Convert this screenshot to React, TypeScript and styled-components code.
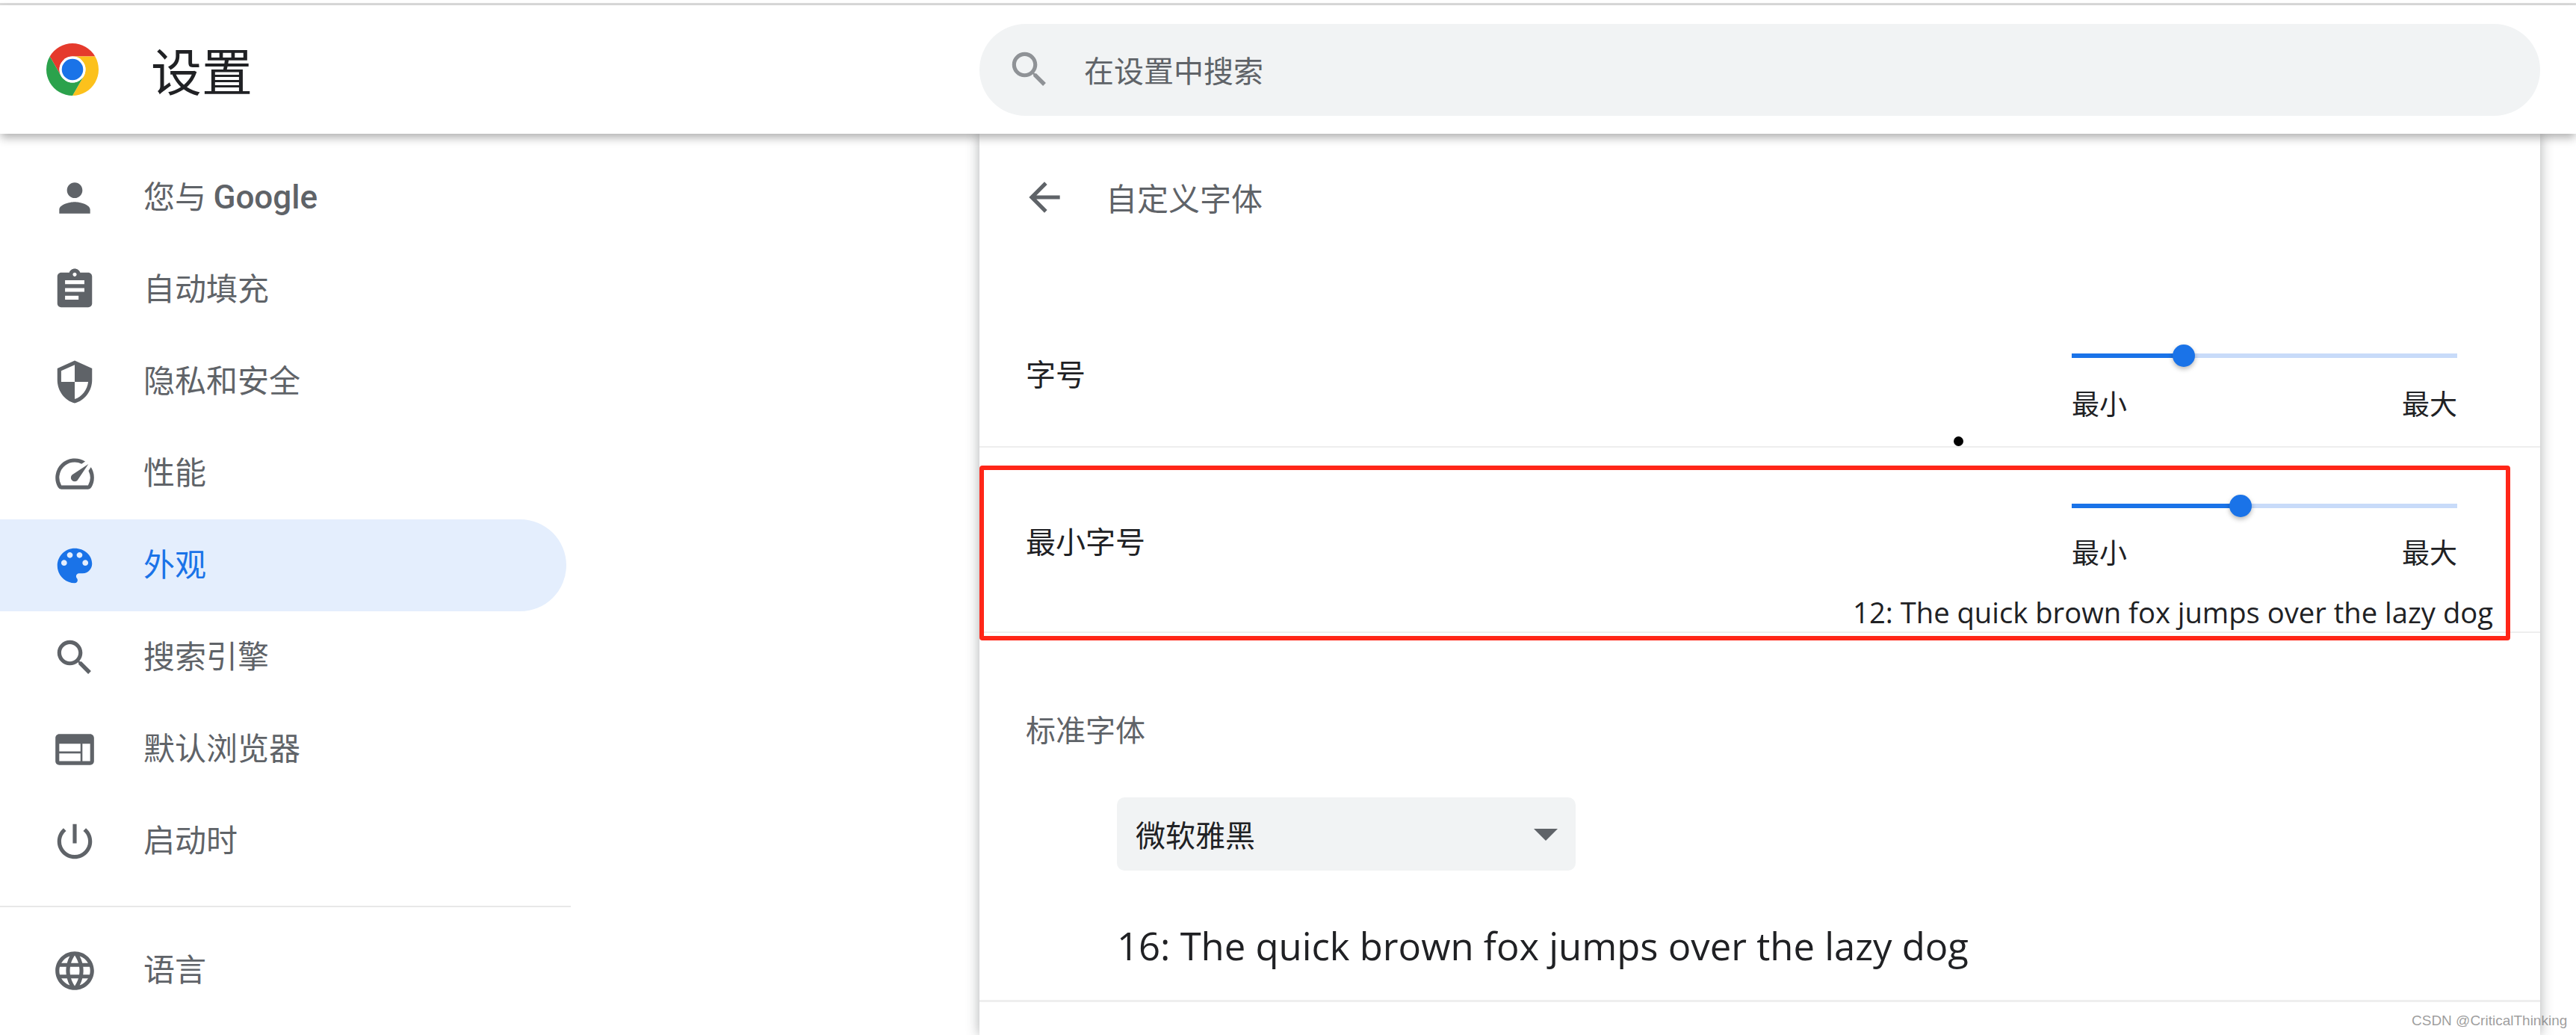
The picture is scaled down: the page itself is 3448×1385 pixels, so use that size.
import React from "react";
import styled, { createGlobalStyle } from "styled-components";

const CJK = `"Noto Sans CJK SC", "Noto Sans", sans-serif`;
const LATIN = `"Open Sans", "Noto Sans CJK SC", sans-serif`;

const Global = createGlobalStyle`
  html, body { margin: 0; padding: 0; background: #fff; }
  * { box-sizing: border-box; }
`;

const Page = styled.div`
  position: relative;
  width: 3448px;
  height: 1385px;
  overflow: hidden;
  background: #fff;
  font-family: ${CJK};
  color: #202124;
`;

const TopLine = styled.div`
  height: 7px;
  border-top: 4px solid #fff;
  background: #dcdcdc;
`;

const Header = styled.header`
  position: relative;
  z-index: 2;
  display: flex;
  align-items: center;
  height: 172px;
  background: #fff;
  box-shadow: 0 6px 12px -1px rgba(0, 0, 0, 0.32);
`;

const Brand = styled.div`
  display: flex;
  align-items: center;
  gap: 70px;
  width: 1311px;
  padding-left: 62px;
`;

const Title = styled.h1`
  margin: 0;
  font-size: 68px;
  line-height: 80px;
  font-weight: 400;
  color: #202124;
`;

const Search = styled.div`
  display: flex;
  align-items: center;
  gap: 42px;
  width: 2089px;
  height: 123px;
  padding-left: 36px;
  border-radius: 62px;
  background: #f1f3f4;
  font-size: 40px;
  color: #5f6368;
`;

const Icon = styled.svg<{ $size?: number; $color?: string }>`
  flex: none;
  width: ${(p) => p.$size ?? 62}px;
  height: ${(p) => p.$size ?? 62}px;
  fill: ${(p) => p.$color ?? "#5f6368"};
`;

const Body = styled.div`
  display: flex;
  height: 1206px;
`;

const Sidebar = styled.nav`
  width: 1311px;
  padding-top: 24px;
`;

const NavItem = styled.div<{ $active?: boolean }>`
  display: flex;
  align-items: center;
  gap: 61px;
  width: 758px;
  height: 123px;
  padding-left: 69px;
  border-radius: 0 62px 62px 0;
  font-size: 42px;
  color: ${(p) => (p.$active ? "#1a73e8" : "#5f6368")};
  background: ${(p) => (p.$active ? "#e4eefd" : "transparent")};
`;

const NavLabel = styled.span`
  margin-top: -8px;
`;

const Wordmark = styled.span`
  font-family: Roboto, sans-serif;
  font-size: 44px;
  font-weight: 500;
`;

const NavDivider = styled.hr`
  width: 764px;
  height: 2px;
  margin: 25px 0 23px;
  border: 0;
  background: #e8e8e8;
`;

const Card = styled.main`
  width: 2089px;
  background: #fff;
  box-shadow: 0 0 16px rgba(60, 64, 67, 0.42);
`;

const SubHeader = styled.div`
  display: flex;
  align-items: center;
  gap: 51px;
  height: 170px;
  padding-left: 56px;
  font-size: 42px;
  color: #5f6368;
  & > span { margin-top: -2px; }
`;

const Row = styled.section<{ $height: number; $top: number }>`
  position: relative;
  display: flex;
  justify-content: space-between;
  height: ${(p) => p.$height}px;
  padding: ${(p) => p.$top}px 111px 0 62px;
  border-bottom: 2px solid #eeeeee;
`;

const RowLabel = styled.div<{ $offset: number }>`
  margin-top: ${(p) => p.$offset}px;
  font-size: 40px;
  line-height: 48px;
  color: #202124;
`;

const SliderBox = styled.div`
  width: 516px;
`;

const Track = styled.div<{ $gap: number }>`
  position: relative;
  height: 6px;
  margin-bottom: ${(p) => p.$gap}px;
  background: #c8dbf9;
`;

const TrackFill = styled.div`
  height: 100%;
  background: #1a73e8;
`;

const Knob = styled.div`
  position: absolute;
  top: -12px;
  width: 30px;
  height: 30px;
  margin-left: -15px;
  border-radius: 50%;
  background: #1a73e8;
  box-shadow: 0 3px 6px rgba(0, 0, 0, 0.28);
`;

const Ends = styled.div`
  display: flex;
  justify-content: space-between;
  font-size: 37px;
  line-height: 44px;
  color: #202124;
`;

const Marker = styled.span`
  position: absolute;
  left: 1304px;
  bottom: 0;
  width: 13px;
  height: 13px;
  border-radius: 50%;
  background: #000;
`;

const Sample = styled.div`
  position: absolute;
  right: 63px;
  bottom: 4px;
  font-family: ${LATIN};
  font-size: 38.2px;
  line-height: 44px;
  color: #202124;
`;

const Highlight = styled.div`
  position: absolute;
  z-index: 1;
  left: 0;
  right: 40px;
  top: 24px;
  bottom: -12px;
  border: 6px solid #ff2618;
  border-radius: 4px;
  pointer-events: none;
`;

const FontSection = styled.section`
  height: 494px;
  padding: 104px 0 0 62px;
  border-bottom: 3px solid #eeeeee;
`;

const SectionLabel = styled.div`
  font-size: 40px;
  line-height: 48px;
  color: #5f6368;
`;

const FontSelect = styled.div`
  position: relative;
  display: flex;
  align-items: center;
  width: 614px;
  height: 98px;
  margin: 68px 0 0 122px;
  padding-left: 25px;
  border-radius: 10px;
  background: #f1f3f4;
  font-size: 40px;
  color: #202124;
`;

const Caret = styled.span`
  position: absolute;
  right: 24px;
  top: 42px;
  width: 0;
  height: 0;
  border-left: 16px solid transparent;
  border-right: 16px solid transparent;
  border-top: 16px solid #5f6368;
`;

const FontPreview = styled.div`
  margin: 63px 0 0 122px;
  font-family: ${LATIN};
  font-size: 50.8px;
  line-height: 76px;
  color: #202124;
`;

const Watermark = styled.div`
  position: absolute;
  z-index: 3;
  left: 3228px;
  top: 1353px;
  font-family: "Liberation Sans", sans-serif;
  font-size: 19px;
  line-height: 26px;
  color: rgba(90, 90, 90, 0.6);
`;

const paths = {
  person: "M12 12c2.21 0 4-1.79 4-4s-1.79-4-4-4-4 1.79-4 4 1.79 4 4 4zm0 2c-2.67 0-8 1.34-8 4v2h16v-2c0-2.66-5.33-4-8-4z",
  assignment: "M19 3h-4.18C14.4 1.84 13.3 1 12 1c-1.3 0-2.4.84-2.82 2H5c-1.1 0-2 .9-2 2v14c0 1.1.9 2 2 2h14c1.1 0 2-.9 2-2V5c0-1.1-.9-2-2-2zm-7 0c.55 0 1 .45 1 1s-.45 1-1 1-1-.45-1-1 .45-1 1-1zm2 14H7v-2h7v2zm3-4H7v-2h10v2zm0-4H7V7h10v2z",
  shield: "M12 1L3 5v6c0 5.55 3.84 10.74 9 12 5.16-1.26 9-6.45 9-12V5l-9-4zm0 10.99h7c-.53 4.12-3.28 7.79-7 8.94V12H5V6.3l7-3.11v8.8z",
  speed: "M20.38 8.57l-1.23 1.85a8 8 0 0 1-.22 7.58H5.07A8 8 0 0 1 15.58 6.85l1.85-1.23A10 10 0 0 0 3.35 19a2 2 0 0 0 1.72 1h13.85a2 2 0 0 0 1.74-1 10 10 0 0 0-.27-10.44zm-9.79 6.84a2 2 0 0 0 2.83 0l5.66-8.49-8.49 5.66a2 2 0 0 0 0 2.83z",
  palette: "M12 3c-4.97 0-9 4.03-9 9s4.03 9 9 9c.83 0 1.5-.67 1.5-1.5 0-.39-.15-.74-.39-1.01-.23-.26-.38-.61-.38-.99 0-.83.67-1.5 1.5-1.5H16c2.76 0 5-2.24 5-5 0-4.42-4.03-8-9-8zm-5.5 9c-.83 0-1.5-.67-1.5-1.5S5.67 9 6.5 9 8 9.67 8 10.5 7.33 12 6.5 12zm3-4C8.67 8 8 7.33 8 6.5S8.67 5 9.5 5s1.5.67 1.5 1.5S10.33 8 9.5 8zm5 0c-.83 0-1.5-.67-1.5-1.5S13.67 5 14.5 5s1.5.67 1.5 1.5S15.33 8 14.5 8zm3 4c-.83 0-1.5-.67-1.5-1.5S16.67 9 17.5 9s1.5.67 1.5 1.5-.67 1.5-1.5 1.5z",
  search: "M15.5 14h-.79l-.28-.27C15.41 12.59 16 11.11 16 9.5 16 5.91 13.09 3 9.5 3S3 5.91 3 9.5 5.91 16 9.5 16c1.61 0 3.09-.59 4.23-1.57l.27.28v.79l5 4.99L20.49 19l-4.99-5zm-6 0C7.01 14 5 11.99 5 9.5S7.01 5 9.5 5 14 7.01 14 9.5 11.99 14 9.5 14z",
  web: "M20 4H4c-1.1 0-1.99.9-1.99 2L2 18c0 1.1.9 2 2 2h16c1.1 0 2-.9 2-2V6c0-1.1-.9-2-2-2zm-5 14H4v-4h11v4zm0-5H4V9h11v4zm5 5h-4V9h4v9z",
  power: "M13 3h-2v10h2V3zm4.83 2.17l-1.42 1.42C17.99 7.86 19 9.81 19 12c0 3.87-3.13 7-7 7s-7-3.13-7-7c0-2.19 1.01-4.14 2.58-5.42L6.17 5.17C4.23 6.82 3 9.26 3 12c0 4.97 4.03 9 9 9s9-4.03 9-9c0-2.74-1.23-5.18-3.17-6.83z",
  language: "M11.99 2C6.47 2 2 6.48 2 12s4.47 10 9.99 10C17.52 22 22 17.52 22 12S17.52 2 11.99 2zm6.93 6h-2.95c-.32-1.25-.78-2.45-1.38-3.56 1.84.63 3.37 1.91 4.33 3.56zM12 4.04c.83 1.2 1.48 2.53 1.91 3.96h-3.82c.43-1.43 1.08-2.76 1.91-3.96zM4.26 14C4.1 13.36 4 12.69 4 12s.1-1.36.26-2h3.38c-.08.66-.14 1.32-.14 2 0 .68.06 1.34.14 2H4.26zm.82 2h2.95c.32 1.25.78 2.45 1.38 3.56-1.84-.63-3.37-1.9-4.33-3.56zm2.95-8H5.08c.96-1.66 2.49-2.93 4.33-3.56C8.81 5.55 8.35 6.75 8.03 8zM12 19.96c-.83-1.2-1.48-2.53-1.91-3.96h3.82c-.43 1.43-1.08 2.76-1.91 3.96zM14.34 14H9.66c-.09-.66-.16-1.32-.16-2 0-.68.07-1.35.16-2h4.68c.09.65.16 1.32.16 2 0 .68-.07 1.34-.16 2zm.25 5.56c.6-1.11 1.06-2.31 1.38-3.56h2.95c-.96 1.65-2.49 2.93-4.33 3.56zM16.36 14c.08-.66.14-1.32.14-2 0-.68-.06-1.34-.14-2h3.38c.16.64.26 1.31.26 2s-.1 1.36-.26 2h-3.38z",
  back: "M20 11H7.83l5.59-5.59L12 4l-8 8 8 8 1.41-1.41L7.83 13H20v-2z",
};

type IconName = keyof typeof paths;

const Glyph = ({ name, size, color }: { name: IconName; size?: number; color?: string }) => (
  <Icon viewBox="0 0 24 24" $size={size} $color={color}>
    <path d={paths[name]} />
  </Icon>
);

const ChromeLogo = () => (
  <Icon viewBox="0 0 48 48" $size={70}>
    <path fill="#e53a2c" d="M44.78 12A24 24 0 0 0 3.22 12L13.61 30A12 12 0 0 1 24 12Z" />
    <path fill="#fcc11c" d="M24 48A24 24 0 0 0 44.78 12L24 12A12 12 0 0 1 34.39 30Z" />
    <path fill="#2ba24c" d="M3.22 12A24 24 0 0 0 24 48L34.39 30A12 12 0 0 1 13.61 30Z" />
    <circle cx="24" cy="24" r="12" fill="#fff" />
    <circle cx="24" cy="24" r="9.8" fill="#1a73e8" />
  </Icon>
);

const nav: { icon: IconName; label: React.ReactNode; active?: boolean }[] = [
  { icon: "person", label: <>您与 <Wordmark>Google</Wordmark></> },
  { icon: "assignment", label: "自动填充" },
  { icon: "shield", label: "隐私和安全" },
  { icon: "speed", label: "性能" },
  { icon: "palette", label: "外观", active: true },
  { icon: "search", label: "搜索引擎" },
  { icon: "web", label: "默认浏览器" },
  { icon: "power", label: "启动时" },
];

const Slider = ({ position, gap }: { position: number; gap: number }) => (
  <SliderBox>
    <Track $gap={gap}>
      <TrackFill style={{ width: position }} />
      <Knob style={{ left: position }} />
    </Track>
    <Ends>
      <span>最小</span>
      <span>最大</span>
    </Ends>
  </SliderBox>
);

export default function App() {
  return (
    <Page>
      <Global />
      <TopLine />
      <Header>
        <Brand>
          <ChromeLogo />
          <Title>设置</Title>
        </Brand>
        <Search>
          <Glyph name="search" color="#8f9296" />
          <span>在设置中搜索</span>
        </Search>
      </Header>
      <Body>
        <Sidebar>
          {nav.map((item) => (
            <NavItem key={item.icon} $active={item.active}>
              <Glyph name={item.icon} color={item.active ? "#1a73e8" : "#5f6368"} />
              <NavLabel>{item.label}</NavLabel>
            </NavItem>
          ))}
          <NavDivider />
          <NavItem>
            <Glyph name="language" />
            <NavLabel>语言</NavLabel>
          </NavItem>
        </Sidebar>
        <Card>
          <SubHeader>
            <Glyph name="back" />
            <span>自定义字体</span>
          </SubHeader>
          <Row $height={250} $top={124}>
            <RowLabel $offset={2}>字号</RowLabel>
            <Slider position={150} gap={38} />
            <Marker />
          </Row>
          <Row $height={248} $top={75}>
            <RowLabel $offset={25}>最小字号</RowLabel>
            <Slider position={226} gap={36} />
            <Sample>12: The quick brown fox jumps over the lazy dog</Sample>
            <Highlight />
          </Row>
          <FontSection>
            <SectionLabel>标准字体</SectionLabel>
            <FontSelect>
              微软雅黑
              <Caret />
            </FontSelect>
            <FontPreview>16: The quick brown fox jumps over the lazy dog</FontPreview>
          </FontSection>
        </Card>
      </Body>
      <Watermark>CSDN @CriticalThinking</Watermark>
    </Page>
  );
}
